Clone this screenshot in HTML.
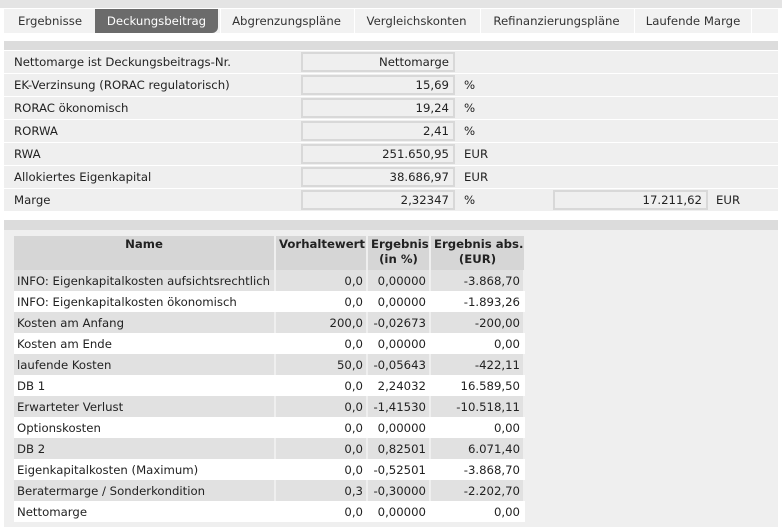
<!DOCTYPE html><html><head><meta charset="utf-8"><style>
*{margin:0;padding:0;box-sizing:border-box}
body{width:782px;height:530px;background:#fff;font-family:"DejaVu Sans","Liberation Sans",sans-serif;font-size:11.7px;color:#222;position:relative;overflow:hidden}
.a{position:absolute}
.tab{position:absolute;top:9px;height:24px;background:#f2f2f2;line-height:24px;text-align:center;color:#333}
.tab.on{background:#6b6b6b;color:#fff;border-radius:0 0 6px 0}
.row{position:absolute;left:4px;width:774px;height:22px;background:#efefef;line-height:22px;padding-left:10px}
.box{position:absolute;height:20px;top:1px;border:2px solid #d8d8d8;background:#efefef;text-align:right;padding-right:4px;line-height:17px}
.u{position:absolute;top:0}
table{position:absolute;left:14px;top:236px;border-collapse:collapse;table-layout:fixed}
td,th{height:21px;padding:0 3px;white-space:nowrap;overflow:hidden}
th{background:#d6d6d6;height:34px;vertical-align:top;padding-top:1px;line-height:15px;border-right:2px solid #efefef}
td{text-align:right;border-right:2px solid #fff}
td:first-child{text-align:left}
tr.g td{background:#e1e1e1;border-right-color:#efefef}
tr.w td{background:#fff}
</style></head><body>
<div class="a" style="left:0;top:0;width:782px;height:8px;background:#e4e4e4"></div>
<div class="a" style="left:4px;top:9px;width:774px;height:24px;background:#f2f2f2"></div>
<div class="tab" style="left:7px;width:86px">Ergebnisse</div>
<div class="tab on" style="left:95px;width:123px">Deckungsbeitrag</div>
<div class="tab" style="left:220px;width:132px;border-left:1px solid #fff">Abgrenzungspläne</div>
<div class="tab" style="left:354px;width:124px;border-left:1px solid #fff">Vergleichskonten</div>
<div class="tab" style="left:480px;width:152px;border-left:1px solid #fff">Refinanzierungspläne</div>
<div class="tab" style="left:634px;width:118px;border-left:1px solid #fff;border-right:1px solid #fff">Laufende Marge</div>
<div class="a" style="left:4px;top:41px;width:774px;height:9px;background:#dcdcdc"></div>

<div class="row" style="top:51px">Nettomarge ist Deckungsbeitrags-Nr.<div class="box" style="left:297px;width:154px">Nettomarge</div></div>
<div class="row" style="top:74px">EK-Verzinsung (RORAC regulatorisch)<div class="box" style="left:297px;width:154px">15,69</div><span class="u" style="left:460px">%</span></div>
<div class="row" style="top:97px">RORAC ökonomisch<div class="box" style="left:297px;width:154px">19,24</div><span class="u" style="left:460px">%</span></div>
<div class="row" style="top:120px">RORWA<div class="box" style="left:297px;width:154px">2,41</div><span class="u" style="left:460px">%</span></div>
<div class="row" style="top:143px">RWA<div class="box" style="left:297px;width:154px">251.650,95</div><span class="u" style="left:460px">EUR</span></div>
<div class="row" style="top:166px">Allokiertes Eigenkapital<div class="box" style="left:297px;width:154px">38.686,97</div><span class="u" style="left:460px">EUR</span></div>
<div class="row" style="top:189px">Marge<div class="box" style="left:297px;width:154px">2,32347</div><span class="u" style="left:460px">%</span><div class="box" style="left:549px;width:155px">17.211,62</div><span class="u" style="left:712px">EUR</span></div>

<div class="a" style="left:4px;top:220px;width:774px;height:10px;background:#dcdcdc"></div>
<div class="a" style="left:4px;top:230px;width:774px;height:297px;background:#efefef"></div>
<table style="width:510px">
<colgroup><col style="width:261px"><col style="width:92px"><col style="width:63px"><col style="width:94px"></colgroup>
<tr><th>Name</th><th>Vorhaltewert</th><th>Ergebnis<br>(in %)</th><th style="border-right:0">Ergebnis abs.<br>(EUR)</th></tr>
<tr class="g"><td>INFO: Eigenkapitalkosten aufsichtsrechtlich</td><td>0,0</td><td>0,00000</td><td>-3.868,70</td></tr>
<tr class="w"><td>INFO: Eigenkapitalkosten ökonomisch</td><td>0,0</td><td>0,00000</td><td>-1.893,26</td></tr>
<tr class="g"><td>Kosten am Anfang</td><td>200,0</td><td>-0,02673</td><td>-200,00</td></tr>
<tr class="w"><td>Kosten am Ende</td><td>0,0</td><td>0,00000</td><td>0,00</td></tr>
<tr class="g"><td>laufende Kosten</td><td>50,0</td><td>-0,05643</td><td>-422,11</td></tr>
<tr class="w"><td>DB 1</td><td>0,0</td><td>2,24032</td><td>16.589,50</td></tr>
<tr class="g"><td>Erwarteter Verlust</td><td>0,0</td><td>-1,41530</td><td>-10.518,11</td></tr>
<tr class="w"><td>Optionskosten</td><td>0,0</td><td>0,00000</td><td>0,00</td></tr>
<tr class="g"><td>DB 2</td><td>0,0</td><td>0,82501</td><td>6.071,40</td></tr>
<tr class="w"><td>Eigenkapitalkosten (Maximum)</td><td>0,0</td><td>-0,52501</td><td>-3.868,70</td></tr>
<tr class="g"><td>Beratermarge / Sonderkondition</td><td>0,3</td><td>-0,30000</td><td>-2.202,70</td></tr>
<tr class="w"><td>Nettomarge</td><td>0,0</td><td>0,00000</td><td>0,00</td></tr>
</table>
</body></html>
